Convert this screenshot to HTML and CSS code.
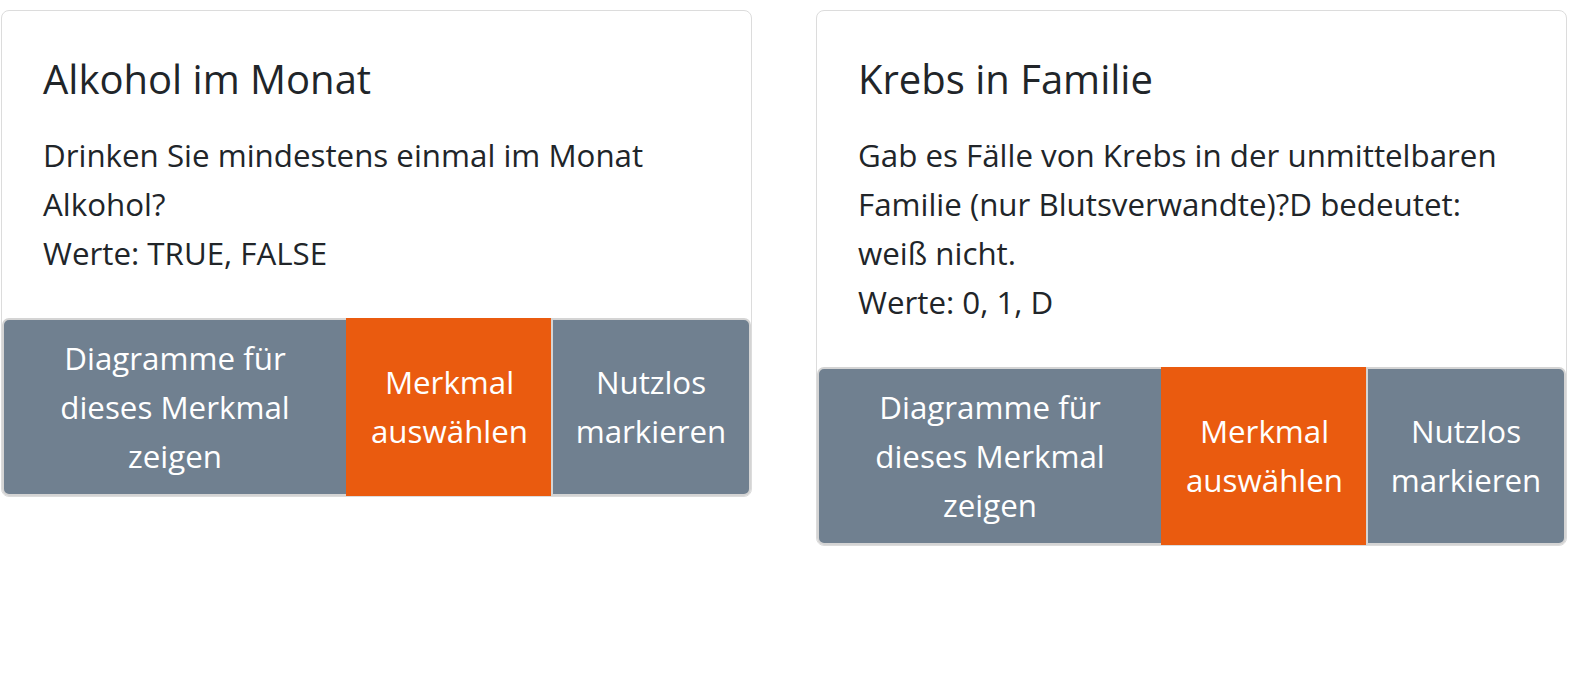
FILE: index.html
```html
<!DOCTYPE html>
<html lang="de">
<head>
<meta charset="utf-8">
<title>Merkmale</title>
<link rel="stylesheet" href="styles.css">
</head>
<body>
<main class="deck">
  <section class="card">
    <div class="card-body">
      <h5 class="card-title">Alkohol im Monat</h5>
      <p class="card-text">Drinken Sie mindestens einmal im Monat Alkohol?<br>Werte: TRUE, FALSE</p>
    </div>
    <div class="btn-group">
      <button class="btn btn-gray btn-show">Diagramme für dieses Merkmal zeigen</button>
      <button class="btn btn-orange btn-select">Merkmal auswählen</button>
      <button class="btn btn-gray btn-useless">Nutzlos markieren</button>
    </div>
  </section>
  <section class="card">
    <div class="card-body">
      <h5 class="card-title">Krebs in Familie</h5>
      <p class="card-text">Gab es Fälle von Krebs in der unmittelbaren Familie (nur Blutsverwandte)?D bedeutet: weiß nicht.<br>Werte: 0, 1, D</p>
    </div>
    <div class="btn-group">
      <button class="btn btn-gray btn-show">Diagramme für dieses Merkmal zeigen</button>
      <button class="btn btn-orange btn-select">Merkmal auswählen</button>
      <button class="btn btn-gray btn-useless">Nutzlos markieren</button>
    </div>
  </section>
</main>
</body>
</html>
```
FILE: styles.css
```css
html, body {
  margin: 0;
  padding: 0;
  background: #ffffff;
}

body {
  font-family: "Open Sans", "Noto Sans", "Liberation Sans", sans-serif;
  font-size: 31.3px;
  line-height: 49px;
  color: #212529;
}

.deck {
  display: flex;
  align-items: flex-start;
  gap: 64px;
  padding: 10px 0 0 1px;
}

.card {
  width: 751px;
  box-sizing: border-box;
  border: 1px solid #dcdcdc;
  border-radius: 8px;
  display: flex;
  flex-direction: column;
  background: #fff;
}

.card-body {
  padding: 42px 45px 40px 41px;
}

.card-title {
  margin: 0 0 26px 0;
  font-size: 40px;
  line-height: 52px;
  font-weight: 400;
}

.card-text {
  margin: 0;
}

.btn-group {
  display: flex;
}

.btn {
  font-family: inherit;
  font-size: 31.3px;
  line-height: 49px;
  color: #ffffff;
  text-align: center;
  padding: 13.5px 18px;
  border: 2px solid #d4d4d4;
  border-radius: 0;
  margin: 0;
  box-sizing: border-box;
}

.btn + .btn {
  margin-left: -2px;
}

.btn-gray {
  background: #708090;
}

.btn-orange {
  background: #ea5b0f;
  border-color: #ea5b0f;
}

.btn-show {
  flex: 0 0 346px;
  border-radius: 7px 0 0 7px;
}

.btn-select {
  flex: 0 0 207px;
}

.btn-useless {
  flex: 1 1 auto;
  border-radius: 0 7px 7px 0;
}
```
